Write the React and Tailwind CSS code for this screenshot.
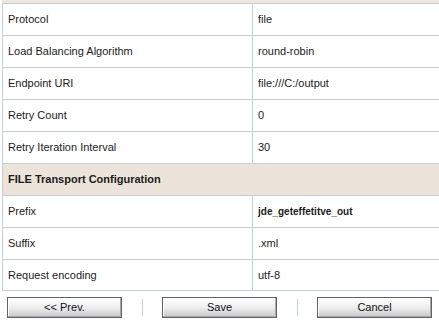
import React from 'react';

const rows = [
    { label: 'Protocol', value: 'file' },
    { label: 'Load Balancing Algorithm', value: 'round-robin' },
    { label: 'Endpoint URI', value: 'file:///C:/output' },
    { label: 'Retry Count', value: '0' },
    { label: 'Retry Iteration Interval', value: '30' },
    { section: 'FILE Transport Configuration' },
    { label: 'Prefix', value: 'jde_geteffetitve_out', strong: true },
    { label: 'Suffix', value: '.xml' },
    { label: 'Request encoding', value: 'utf-8', last: true },
];

const Button = ({ children }) => (
    <button className="w-[115px] h-[21px] border border-[#5f6368] bg-gradient-to-b from-[#ffffff] via-[#eeeeee] to-[#c8c8c8] text-[11px] text-[#111] leading-none shadow-[inset_-1px_-1px_0_#a9a9a9,inset_1px_1px_0_#ffffff]">
        {children}
    </button>
);

const App = () => {
    return (
        <div className="w-[439px] h-[324px] bg-white overflow-hidden font-['Liberation_Sans',Arial,sans-serif] text-[#1b1b1b]">
            {/* bottom of the previous header band */}
            <div className="h-[3px] ml-[2px] bg-[#eee7dd]" />

            <div className="ml-[2px] border-l border-[#c3cedb]">
                {rows.map((row, i) =>
                    row.section ? (
                        <div key={i} className="h-[32px] flex items-center border-t border-[#c3cedb] bg-[#ece4da] pl-[5px] text-[11px] font-bold">
                            {row.section}
                        </div>
                    ) : (
                        <div
                            key={i}
                            className={`flex border-t border-[#c3cedb] text-[11px] ${row.last ? 'h-[32px] border-b' : 'h-[32px]'}`}
                        >
                            <div className="w-[249px] flex items-center pl-[5px]">{row.label}</div>
                            <div className="flex-1 flex items-center pl-[5px] border-l border-[#c3cedb]">
                                {row.strong ? (
                                    <span className="text-[10px] font-bold">{row.value}</span>
                                ) : (
                                    row.value
                                )}
                            </div>
                        </div>
                    )
                )}
            </div>

            {/* footer actions */}
            <div className="flex items-center pl-[7px] mt-[6px]">
                <Button>&lt;&lt; Prev.</Button>
                <div className="w-px h-[17px] bg-[#c7d0db] ml-[20px] mr-[19px]" />
                <Button>Save</Button>
                <div className="w-px h-[17px] bg-[#c7d0db] ml-[20px] mr-[19px]" />
                <Button>Cancel</Button>
            </div>
        </div>
    );
};

export default App;
